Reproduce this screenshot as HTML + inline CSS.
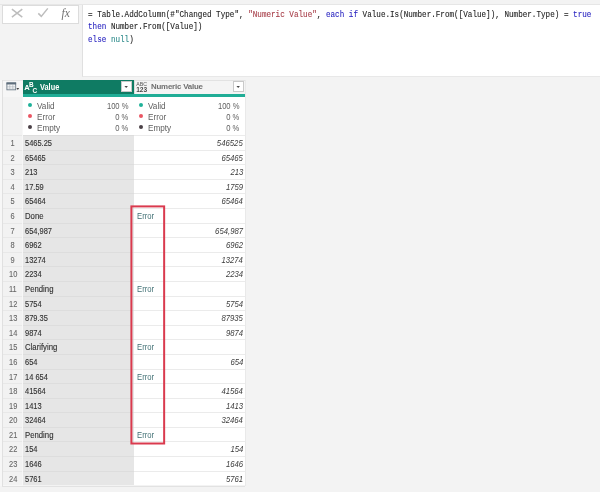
<!DOCTYPE html>
<html><head><meta charset="utf-8"><title>Power Query</title>
<style>
html,body{margin:0;padding:0}
body{width:600px;height:492px;background:#f3f3f3;position:relative;overflow:hidden;font-family:"Liberation Sans",sans-serif;font-size:8.3px;color:#3a3a3a}
div,span{box-sizing:border-box}
.abs{position:absolute}
#topline{left:0;top:4px;width:600px;height:1px;background:#e6e6e6}
#tb{left:2px;top:5px;width:77px;height:19px;background:#fff;border:1px solid #dcdcdc}
#fx{left:82px;top:5px;width:518px;height:71.6px;background:#fff;border-left:1px solid #e0e0e0;border-bottom:1px solid #e8e8e8}
.cl{position:absolute;left:5px;font-family:"Liberation Mono",monospace;font-size:8.3px;line-height:12.5px;height:12.5px;white-space:pre;color:#222;-webkit-text-stroke:0.1px;transform:scaleX(0.919);transform-origin:0 50%}
.kw{color:#2a25c0} .str{color:#a63c47} .nul{color:#2e8b8b}
#corner{left:2px;top:79.5px;width:21px;height:17.5px;background:#f6f6f6;border-top:1px solid #e6e6e6;border-left:1px solid #e9e9e9}
#h1{left:23px;top:79.5px;width:111px;height:14.8px;background:#0f7b63}
#h2{left:134px;top:79.5px;width:111px;height:14.8px;background:#f4f4f4;border-left:1px solid #dcdcdc;box-shadow:inset 0 1px 0 #e2e2e2}
#teal{left:23px;top:94.2px;width:222px;height:3px;background:#20ad96}
#qbg{left:23px;top:96.6px;width:222px;height:39.2px;background:#fff}
#rncol{left:2px;top:96.6px;width:21px;height:389px;background:#f7f7f7}
#rncol2{left:3px;top:96.6px;width:18.8px;height:40px;background:#f2f2f2}
.h1t{position:absolute;left:17px;top:2.5px;font-weight:bold;color:#fff;font-size:8.4px;line-height:10px;transform:scaleX(.88);transform-origin:0 50%}
.h2t{position:absolute;left:16px;top:2.3px;font-weight:bold;color:#6e6e6e;font-size:7.9px;line-height:10px;letter-spacing:-0.2px}
.dd{position:absolute;top:1.5px;width:11px;height:11.2px;background:#fff;border:1px solid #c9c9c9}
.dd:after{content:"";position:absolute;left:2.6px;top:3.7px;width:4px;height:2.3px;background:#4a4a4a;clip-path:polygon(0 0,100% 0,50% 100%)}
.q{position:absolute;top:96.6px;height:39.2px}
.ql{position:absolute;left:0;right:0;height:11px;line-height:11px;font-size:8.3px;color:#5e5e5e}
.dot{position:absolute;left:5.1px;top:2.4px;width:4px;height:4px;border-radius:50%}
.qn{position:absolute;left:13.9px}
.qp{position:absolute;right:5.5px}
.sl,.sr,.sc{display:inline-block;transform:scaleX(0.9)}
.sl{transform-origin:0 50%} .sl.w{transform:scaleX(.935)} .sl.e{transform:scaleX(.93)} .sr{transform-origin:100% 50%} .sc{transform-origin:50% 50%}
.row{position:absolute;left:0;width:245px;height:14.59px;line-height:15.39px}
.rn{position:absolute;left:3px;width:18.8px;height:100%;text-align:center;color:#666;background:#f2f2f2;border-top:1px solid #e8e8e8;padding-left:0.6px;font-size:9.3px;-webkit-text-stroke:0.1px}
.rn .sc{transform:scaleX(.8)}
.c1{position:absolute;left:23px;width:111px;height:100%;background:#e6e6e6;border-top:1px solid #dddddd;padding-left:2.2px;color:#303030;-webkit-text-stroke:0.12px}
.c2{position:absolute;left:134px;width:111px;height:100%;background:#fff;border-top:1px solid #ebebeb;text-align:right;padding-right:2.1px;font-style:italic;color:#3c3c3c;font-size:8.6px}
.c2.err{text-align:left;font-style:normal;padding-left:2.5px;color:#3f6f73;font-size:8.3px}
#red{left:0;top:0}
#tbottom{left:2px;top:485.6px;width:243px;height:1px;background:#e2e2e2}
#tright{left:245px;top:79.5px;width:1px;height:406px;background:#e9e9e9}
#wrap{position:absolute;left:0;top:0;width:600px;height:492px;will-change:transform;transform:translateZ(0)}
</style></head><body><div id="wrap">
<div class="abs" id="topline"></div>
<div class="abs" id="tb">
<svg class="abs" style="left:0;top:0" width="76" height="18" viewBox="0 0 76 18">
<path d="M8.9 3.1 L19.3 11.1 M19.3 3.1 L8.9 11.1" stroke="#bdbdbd" stroke-width="1.5" fill="none"/>
<path d="M35.3 7.4 L38.3 10.4 L44.8 2.4" stroke="#bdbdbd" stroke-width="1.5" fill="none"/>
<text x="58.5" y="10.9" font-family="Liberation Serif, serif" font-style="italic" font-size="11.5" fill="#707070">fx</text>
</svg>
</div>
<div class="abs" id="fx">
<div class="cl" style="top:3.6px">= Table.AddColumn(#"Changed Type", <span class="str">"Numeric Value"</span>, <span class="kw">each</span> <span class="kw">if</span> Value.Is(Number.From([Value]), Number.Type) = <span class="kw">true</span></div>
<div class="cl" style="top:16.1px"><span class="kw">then</span> Number.From([Value])</div>
<div class="cl" style="top:28.6px"><span class="kw">else</span> <span class="nul">null</span>)</div>
</div>

<div class="abs" id="corner">
<svg class="abs" style="left:-1.2px;top:-1.5px" width="21" height="17.5" viewBox="0 0 21 17.5">
<rect x="4.9" y="3.9" width="8.8" height="6.9" fill="#fff" stroke="#6a7885" stroke-width="0.9"/>
<rect x="4.5" y="3.5" width="9.6" height="2" fill="#5f6e7c"/>
<path d="M4.9 7.3H13.7 M4.9 9H13.7 M7.8 5.5V10.8 M10.8 5.5V10.8" stroke="#9aa5ad" stroke-width="0.5"/>
<path d="M14.4 9 L17.2 9 L15.8 10.9 Z" fill="#444"/>
</svg>
</div>
<div class="abs" id="h1">
<svg class="abs" style="left:0.5px;top:1.5px" width="14" height="13" viewBox="0 0 14 13">
<text x="0.3" y="9.3" font-family="Liberation Sans, sans-serif" font-weight="bold" font-size="7.6" fill="#fff">A</text>
<text x="5" y="6" font-family="Liberation Sans, sans-serif" font-weight="bold" font-size="6.4" fill="#fff">B</text>
<text x="8.6" y="12" font-family="Liberation Sans, sans-serif" font-weight="bold" font-size="6.4" fill="#fff">C</text>
</svg>
<div class="h1t">Value</div>
<div class="dd" style="left:97.6px"></div>
</div>
<div class="abs" id="h2">
<svg class="abs" style="left:1px;top:1px" width="14" height="13" viewBox="0 0 14 13">
<text x="0.3" y="4.9" font-family="Liberation Sans, sans-serif" font-size="5.6" fill="#555" textLength="10.8" lengthAdjust="spacingAndGlyphs">ABC</text>
<text x="0.2" y="10.9" font-family="Liberation Sans, sans-serif" font-weight="bold" font-size="6.4" fill="#4a4a4a" textLength="11" lengthAdjust="spacingAndGlyphs">123</text>
</svg>
<div class="h2t">Numeric Value</div>
<div class="dd" style="left:97.6px"></div>
</div>
<div class="abs" id="teal"></div>
<div class="abs" id="qbg"></div>
<div class="abs" id="rncol"></div><div class="abs" id="rncol2"></div>
<div class="q" style="left:23px;width:111px"><div class="ql" style="top:4.4px"><span class="dot" style="background:#1fb199"></span><span class="qn"><span class="sl" style="transform:scaleX(.985)">Valid</span></span><span class="qp"><span class="sr" style="transform:scaleX(.92)">100 %</span></span></div><div class="ql" style="top:15.4px"><span class="dot" style="background:#ea5563"></span><span class="qn"><span class="sl" style="transform:scaleX(.985)">Error</span></span><span class="qp"><span class="sr" style="transform:scaleX(.92)">0 %</span></span></div><div class="ql" style="top:26.4px"><span class="dot" style="background:#4a4046"></span><span class="qn"><span class="sl" style="transform:scaleX(.985)">Empty</span></span><span class="qp"><span class="sr" style="transform:scaleX(.92)">0 %</span></span></div></div>
<div class="q" style="left:134px;width:111px"><div class="ql" style="top:4.4px"><span class="dot" style="background:#1fb199"></span><span class="qn"><span class="sl" style="transform:scaleX(.985)">Valid</span></span><span class="qp"><span class="sr" style="transform:scaleX(.92)">100 %</span></span></div><div class="ql" style="top:15.4px"><span class="dot" style="background:#ea5563"></span><span class="qn"><span class="sl" style="transform:scaleX(.985)">Error</span></span><span class="qp"><span class="sr" style="transform:scaleX(.92)">0 %</span></span></div><div class="ql" style="top:26.4px"><span class="dot" style="background:#4a4046"></span><span class="qn"><span class="sl" style="transform:scaleX(.985)">Empty</span></span><span class="qp"><span class="sr" style="transform:scaleX(.92)">0 %</span></span></div></div>
<div class="row" style="top:135.10px"><div class="rn"><span class="sc">1</span></div><div class="c1"><span class="sl">5465.25</span></div><div class="c2"><span class="sr">546525</span></div></div>
<div class="row" style="top:149.69px"><div class="rn"><span class="sc">2</span></div><div class="c1"><span class="sl">65465</span></div><div class="c2"><span class="sr">65465</span></div></div>
<div class="row" style="top:164.28px"><div class="rn"><span class="sc">3</span></div><div class="c1"><span class="sl">213</span></div><div class="c2"><span class="sr">213</span></div></div>
<div class="row" style="top:178.87px"><div class="rn"><span class="sc">4</span></div><div class="c1"><span class="sl">17.59</span></div><div class="c2"><span class="sr">1759</span></div></div>
<div class="row" style="top:193.46px"><div class="rn"><span class="sc">5</span></div><div class="c1"><span class="sl">65464</span></div><div class="c2"><span class="sr">65464</span></div></div>
<div class="row" style="top:208.05px"><div class="rn"><span class="sc">6</span></div><div class="c1"><span class="sl w">Done</span></div><div class="c2 err"><span class="sl e">Error</span></div></div>
<div class="row" style="top:222.64px"><div class="rn"><span class="sc">7</span></div><div class="c1"><span class="sl">654,987</span></div><div class="c2"><span class="sr">654,987</span></div></div>
<div class="row" style="top:237.23px"><div class="rn"><span class="sc">8</span></div><div class="c1"><span class="sl">6962</span></div><div class="c2"><span class="sr">6962</span></div></div>
<div class="row" style="top:251.82px"><div class="rn"><span class="sc">9</span></div><div class="c1"><span class="sl">13274</span></div><div class="c2"><span class="sr">13274</span></div></div>
<div class="row" style="top:266.41px"><div class="rn"><span class="sc">10</span></div><div class="c1"><span class="sl">2234</span></div><div class="c2"><span class="sr">2234</span></div></div>
<div class="row" style="top:281.00px"><div class="rn"><span class="sc">11</span></div><div class="c1"><span class="sl w">Pending</span></div><div class="c2 err"><span class="sl e">Error</span></div></div>
<div class="row" style="top:295.59px"><div class="rn"><span class="sc">12</span></div><div class="c1"><span class="sl">5754</span></div><div class="c2"><span class="sr">5754</span></div></div>
<div class="row" style="top:310.18px"><div class="rn"><span class="sc">13</span></div><div class="c1"><span class="sl">879.35</span></div><div class="c2"><span class="sr">87935</span></div></div>
<div class="row" style="top:324.77px"><div class="rn"><span class="sc">14</span></div><div class="c1"><span class="sl">9874</span></div><div class="c2"><span class="sr">9874</span></div></div>
<div class="row" style="top:339.36px"><div class="rn"><span class="sc">15</span></div><div class="c1"><span class="sl w">Clarifying</span></div><div class="c2 err"><span class="sl e">Error</span></div></div>
<div class="row" style="top:353.95px"><div class="rn"><span class="sc">16</span></div><div class="c1"><span class="sl">654</span></div><div class="c2"><span class="sr">654</span></div></div>
<div class="row" style="top:368.54px"><div class="rn"><span class="sc">17</span></div><div class="c1"><span class="sl">14 654</span></div><div class="c2 err"><span class="sl e">Error</span></div></div>
<div class="row" style="top:383.13px"><div class="rn"><span class="sc">18</span></div><div class="c1"><span class="sl">41564</span></div><div class="c2"><span class="sr">41564</span></div></div>
<div class="row" style="top:397.72px"><div class="rn"><span class="sc">19</span></div><div class="c1"><span class="sl">1413</span></div><div class="c2"><span class="sr">1413</span></div></div>
<div class="row" style="top:412.31px"><div class="rn"><span class="sc">20</span></div><div class="c1"><span class="sl">32464</span></div><div class="c2"><span class="sr">32464</span></div></div>
<div class="row" style="top:426.90px"><div class="rn"><span class="sc">21</span></div><div class="c1"><span class="sl w">Pending</span></div><div class="c2 err"><span class="sl e">Error</span></div></div>
<div class="row" style="top:441.49px"><div class="rn"><span class="sc">22</span></div><div class="c1"><span class="sl">154</span></div><div class="c2"><span class="sr">154</span></div></div>
<div class="row" style="top:456.08px"><div class="rn"><span class="sc">23</span></div><div class="c1"><span class="sl">1646</span></div><div class="c2"><span class="sr">1646</span></div></div>
<div class="row" style="top:470.67px"><div class="rn"><span class="sc">24</span></div><div class="c1"><span class="sl">5761</span></div><div class="c2"><span class="sr">5761</span></div></div>
<div class="abs" id="tbottom"></div>
<div class="abs" style="left:2px;top:79.5px;width:1px;height:406px;background:#e0e0e0"></div>
<div class="abs" style="left:0;top:79.5px;width:2px;height:406px;background:#f7f7f7"></div>
<div class="abs" id="tright"></div>
<svg class="abs" id="red" width="600" height="492" viewBox="0 0 600 492"><rect x="131.4" y="206.4" width="32.75" height="237.1" fill="none" stroke="#da3a4e" stroke-width="2"/></svg>
</div></body></html>
